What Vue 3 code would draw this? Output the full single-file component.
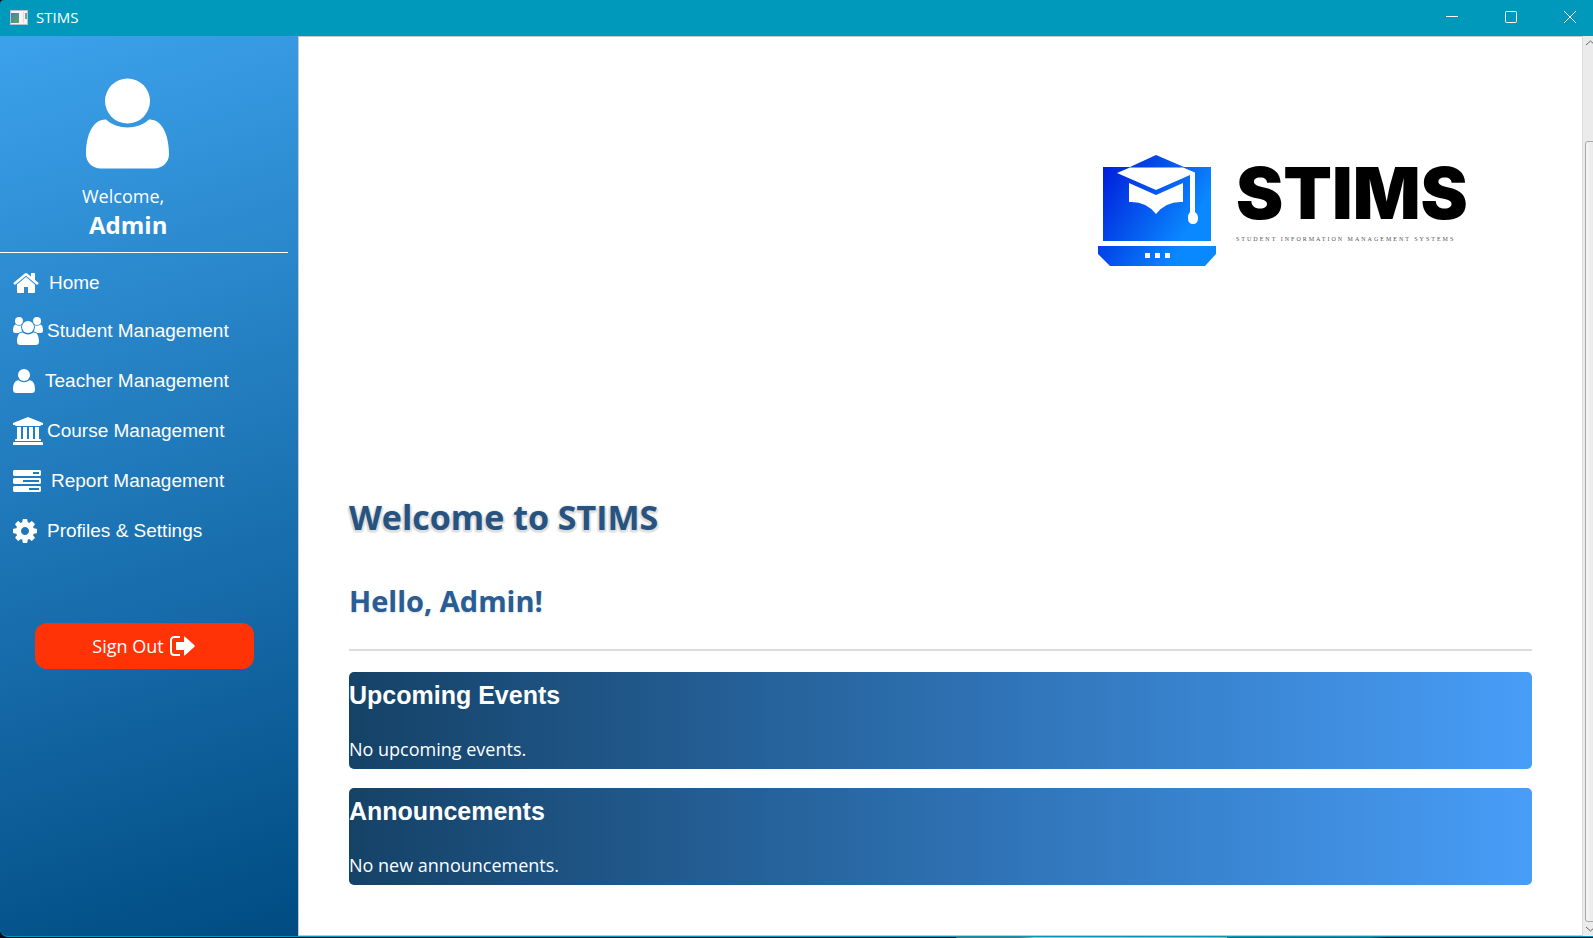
<script setup>
const navItems = [
  { id: 'home', label: 'Home', width: 26, height: 22, tight: false },
  { id: 'students', label: 'Student Management', width: 30, height: 28, tight: true },
  { id: 'teachers', label: 'Teacher Management', width: 22, height: 24, tight: false },
  { id: 'courses', label: 'Course Management', width: 30, height: 28, tight: true },
  { id: 'reports', label: 'Report Management', width: 28, height: 22, tight: false },
  { id: 'settings', label: 'Profiles & Settings', width: 24, height: 24, tight: false },
]

const cards = [
  { title: 'Upcoming Events', text: 'No upcoming events.' },
  { title: 'Announcements', text: 'No new announcements.' },
]
</script>

<template>
  <div class="desktop">
    <div class="window">
      <header class="titlebar">
        <svg class="app-icon" width="18" height="15" viewBox="0 0 18 15" aria-hidden="true">
          <defs>
            <linearGradient id="appPane" x1="0" y1="0" x2="1" y2="1">
              <stop offset="0" stop-color="#4a7fa5" />
              <stop offset="1" stop-color="#58a86a" />
            </linearGradient>
          </defs>
          <rect width="18" height="15" fill="#b9c2c4" />
          <rect x="1" y="1" width="16" height="13" fill="#f4f4f4" />
          <rect x="1" y="3" width="8" height="10" fill="url(#appPane)" />
          <rect x="13" y="2" width="1" height="11" fill="#dcdcdc" />
          <rect x="15" y="3" width="2" height="6" fill="#6aa893" />
        </svg>
        <span class="app-title">STIMS</span>
        <div class="window-buttons">
          <button type="button" aria-label="Minimize">
            <svg width="12" height="12" viewBox="0 0 12 12"><path d="M0 5.5h12" /></svg>
          </button>
          <button type="button" aria-label="Maximize">
            <svg width="12" height="12" viewBox="0 0 12 12"><rect x=".5" y=".5" width="11" height="11" rx="1" /></svg>
          </button>
          <button type="button" aria-label="Close">
            <svg width="12" height="12" viewBox="0 0 12 12"><path d="M0 0l12 12M12 0L0 12" /></svg>
          </button>
        </div>
      </header>

      <div class="body">
        <aside class="sidebar">
          <div class="profile">
            <svg class="avatar" width="84" height="92" viewBox="0 0 84 92" fill="#fff" aria-hidden="true">
              <circle cx="41.5" cy="23" r="22.5" />
              <path d="M20 41.5C31 52 52 52 63 41.5C76 41 83 57 83 76C83 84 77 90.500 68 90.500H15C6 90.500 0 84 0 76C0 57 7 41 20 41.500Z" />
            </svg>
            <p class="greeting">Welcome,</p>
            <p class="user">Admin</p>
          </div>

          <nav class="nav">
            <a
              v-for="item in navItems"
              :key="item.id"
              href="#"
              class="nav-item"
              :class="{ tight: item.tight }"
            >
              <svg v-if="item.id === 'home'" :width="item.width" :height="item.height" viewBox="64 253 1664 1283" aria-hidden="true">
                <path d="M1472 992v480q0 26-19 45t-45 19h-384v-384h-256v384h-384q-26 0-45-19t-19-45v-480q0-1 .5-3t.5-3l575-474 575 474q1 2 1 6zm223-69l-62 74q-8 9-21 11h-3q-13 0-21-7l-692-577-692 577q-12 8-24 7-13-2-21-11l-62-74q-8-10-7-23.5t11-21.5l719-599q32-26 76-26t76 26l244 204v-195q0-14 9-23t23-9h192q14 0 23 9t9 23v408l219 182q10 8 11 21.5t-7 23.5z" />
              </svg>
              <svg v-else-if="item.id === 'students'" :width="item.width" :height="item.height" viewBox="0 0 30 28" aria-hidden="true">
                <defs>
                  <mask id="frontPerson">
                    <rect width="30" height="28" fill="#fff" />
                    <circle cx="15" cy="10" r="7" fill="#000" />
                    <path d="M9 14.500C2 16 3 24 3 28H27C27 24 28 16 21 14.500Z" fill="#000" />
                  </mask>
                </defs>
                <g mask="url(#frontPerson)">
                  <circle cx="6" cy="4" r="4" />
                  <circle cx="24" cy="4" r="4" />
                  <path d="M2.500 7.500Q6 10 9.500 7.500L12 12L8 16H2.500Q0 16 0 13.500Q0 8.500 2.500 7.500Z" />
                  <path d="M27.500 7.500Q24 10 20.500 7.500L18 12L22 16H27.500Q30 16 30 13.500Q30 8.500 27.500 7.500Z" />
                </g>
                <circle cx="15" cy="10" r="6" />
                <path d="M9.500 15.500Q15 19.500 20.500 15.500C25 15.500 26 20.500 26 24.500Q26 28 22.500 28H7.500Q4 28 4 24.500C4 20.500 5 15.500 9.500 15.500Z" />
              </svg>
              <svg v-else-if="item.id === 'teachers'" :width="item.width" :height="item.height" viewBox="0 0 22 24" aria-hidden="true">
                <circle cx="11" cy="6" r="6" />
                <path d="M5.500 11.200Q11 15.500 16.500 11.200C21 11.200 22 16.500 22 20.500Q22 24 18.500 24H3.500Q0 24 0 20.500C0 16.500 1 11.200 5.500 11.200Z" />
              </svg>
              <svg v-else-if="item.id === 'courses'" :width="item.width" :height="item.height" viewBox="0 0 30 28" aria-hidden="true">
                <path d="M15 0L30 6V8H28Q28 9 27 9H3Q2 9 2 8H0V6Z" />
                <path d="M4 10H8V22H10V10H14V22H16V10H20V22H22V10H26V22H27Q28 22 28 23V24H2V23Q2 22 3 22H4Z" />
                <path d="M1 25H29Q30 25 30 26V28H0V26Q0 25 1 25Z" />
              </svg>
              <svg v-else-if="item.id === 'reports'" :width="item.width" :height="item.height" viewBox="0 0 28 22" aria-hidden="true">
                <path fill-rule="evenodd" d="M1 0H27L28 1V5L27 6H1L0 5V1ZM20 2V4H26V2Z" />
                <path fill-rule="evenodd" d="M1 8H27L28 9V13L27 14H1L0 13V9ZM10 10V12H26V10Z" />
                <path fill-rule="evenodd" d="M1 16H27L28 17V21L27 22H1L0 21V17ZM16 18V20H26V18Z" />
              </svg>
              <svg v-else :width="item.width" :height="item.height" viewBox="128 128 1536 1536" aria-hidden="true">
                <path d="M1152 896q0-106-75-181t-181-75-181 75-75 181 75 181 181 75 181-75 75-181zm512-109v222q0 12-8 23t-20 13l-185 28q-19 54-39 91 35 50 107 138 10 12 10 25t-9 23q-27 37-99 108t-94 71q-12 0-26-9l-138-108q-44 23-91 38-16 136-29 186-7 28-36 28h-222q-14 0-24.5-8.5t-11.500-21.500l-28-184q-49-16-90-37l-141 107q-10 9-25 9-14 0-25-11-126-114-165-168-7-10-7-23 0-12 8-23 15-21 51-66.500t54-70.500q-27-50-41-99l-183-27q-13-2-21-12.500t-8-23.500v-222q0-12 8-23t19-13l186-28q14-46 39-92-40-57-107-138-10-12-10-24 0-10 9-23 26-36 98.500-107.500t94.500-71.500q13 0 26 10l138 107q44-23 91-38 16-136 29-186 7-28 36-28h222q14 0 24.500 8.500t11.500 21.500l28 184q49 16 90 37l142-107q9-9 24-9 13 0 25 10 129 119 165 170 7 8 7 22 0 12-8 23-15 21-51 66.500t-54 70.500q26 50 41 98l183 28q13 2 21 12.500t8 23.500z" />
              </svg>
              <span>{{ item.label }}</span>
            </a>
          </nav>

          <button type="button" class="sign-out">
            <span>Sign Out</span>
            <svg width="25" height="20" viewBox="0 0 25 20" aria-hidden="true">
              <path d="M10 1H4.500Q1 1 1 4.500V15.500Q1 19 4.500 19H10" fill="none" stroke="#fff" stroke-width="2" />
              <path d="M6 6H14V1Q14 0 15 .7L24.500 9.300Q25 10 24.500 10.700L15 19.300Q14 20 14 19V14H6Z" fill="#fff" />
            </svg>
          </button>
        </aside>

        <main class="content">
          <div class="logo">
            <svg width="118" height="112" viewBox="0 0 118 112" aria-hidden="true">
              <defs>
                <linearGradient id="logoBlue" gradientUnits="userSpaceOnUse" x1="2" y1="20" x2="90" y2="74">
                  <stop offset="0" stop-color="#001fdc" />
                  <stop offset="1" stop-color="#0a88ff" />
                </linearGradient>
                <linearGradient id="baseBlue" gradientUnits="userSpaceOnUse" x1="0" y1="60" x2="78" y2="104">
                  <stop offset="0" stop-color="#0030e0" />
                  <stop offset="1" stop-color="#0a88ff" />
                </linearGradient>
              </defs>
              <path d="M5 12H32L58 0L86 12H113V86H5Z" fill="url(#logoBlue)" />
              <path d="M0 91H118V99L107 111H12L0 99Z" fill="url(#baseBlue)" />
              <g fill="#fff">
                <path d="M19 18L32 12.500H85L97 17.500V57Q100 59 100 63Q100 69 95 69Q90 69 90 63Q90 59 92 57V20L58 35Z" />
                <path d="M31 28L58 40L85 28V47Q68 46 58 59Q48 46 31 47Z" />
                <rect x="47" y="98" width="5" height="5" />
                <rect x="57" y="98" width="5" height="5" />
                <rect x="67" y="98" width="5" height="5" />
              </g>
            </svg>
            <div class="logo-text">
              <span class="logo-name">STIMS</span>
              <span class="logo-tagline">STUDENT INFORMATION MANAGEMENT SYSTEMS</span>
            </div>
          </div>

          <h1>Welcome to STIMS</h1>
          <h2>Hello, Admin!</h2>
          <hr />

          <section v-for="card in cards" :key="card.title" class="card">
            <h3>{{ card.title }}</h3>
            <p>{{ card.text }}</p>
          </section>
        </main>

        <div class="scrollbar">
          <button type="button" aria-label="Scroll up">
            <svg width="9" height="6" viewBox="0 0 9 6"><path d="M0 5L4.500 1L9 5" /></svg>
          </button>
          <div class="track"><div class="thumb"></div></div>
          <button type="button" aria-label="Scroll down">
            <svg width="9" height="6" viewBox="0 0 9 6"><path d="M0 1L4.500 5L9 1" /></svg>
          </button>
        </div>
      </div>
    </div>
  </div>
</template>

<style>
body {
  margin: 0;
  background: #000;
}
</style>

<style scoped>
.desktop {
  box-sizing: border-box;
  height: 100vh;
  min-height: 900px;
  padding-bottom: 1px;
  overflow: hidden;
  background: linear-gradient(90deg, #0a0a0e 60%, #d8401c 60%, #d8401c 64%, #c8b890 65%, #b8a880 77%, #2c6868 77%, #2c5860 86%, #0a0a0e 87%);
  font-family: "Open Sans", "Noto Sans", sans-serif;
}

.window {
  box-sizing: border-box;
  display: flex;
  flex-direction: column;
  height: 100%;
  overflow: hidden;
  border-bottom: 1px solid #0099bc;
  border-radius: 4px 0 0 8px;
  background: #0099bc;
}

.titlebar {
  box-sizing: border-box;
  display: flex;
  align-items: center;
  flex: none;
  height: 36px;
  padding: 0 0 2px 10px;
  color: #fff;
}

.app-icon {
  flex: none;
  margin-right: 8px;
}

.app-title {
  font-size: 15px;
  line-height: 20px;
}

.window-buttons {
  display: flex;
  gap: 1px;
  margin-left: auto;
  margin-right: -6px;
}

.window-buttons button {
  display: flex;
  align-items: center;
  justify-content: center;
  width: 58px;
  height: 34px;
  padding: 0;
  border: 0;
  background: none;
}

.window-buttons svg {
  fill: none;
  stroke: #fff;
}

.body {
  display: grid;
  grid-template-columns: 298px 1fr 10px;
  flex: 1;
  min-height: 0;
}

.sidebar {
  background: linear-gradient(162deg, #3ca2ec, #004b82);
  color: #fff;
}

.profile {
  width: 288px;
  border-bottom: 1px solid #fff;
}

.avatar {
  display: block;
  margin: 42px 0 0 86px;
}

.greeting {
  margin: 12px 0 0 82px;
  font-size: 18px;
  line-height: 28px;
}

.user {
  margin: 0 0 0 89px;
  padding-bottom: 12px;
  font-size: 24px;
  font-weight: 700;
  line-height: 30px;
}

.nav {
  display: flex;
  flex-direction: column;
  padding-top: 7px;
}

.nav-item {
  display: flex;
  align-items: center;
  gap: 10px;
  height: 50px;
  padding-left: 13px;
  color: #fff;
  font-family: "Liberation Sans", Arial, sans-serif;
  font-size: 19px;
  text-decoration: none;
}

.nav-item.tight {
  gap: 4px;
}

.nav-item:first-child {
  height: 46px;
}

.nav-item svg {
  flex: none;
  fill: #fff;
}

.sign-out {
  display: flex;
  align-items: center;
  justify-content: center;
  gap: 6px;
  width: 219px;
  height: 46px;
  margin: 67px 0 0 35px;
  padding: 0 2px 0 0;
  border: 0;
  border-radius: 12px;
  background: #ff3305;
  color: #fff;
  font-family: inherit;
  font-size: 18px;
}

.content {
  min-width: 0;
  padding: 118px 50px 0 50px;
  overflow: hidden;
  border: 1px solid #c8c8c8;
  border-right-color: #dcdcdc;
  background: #fff;
}

.logo {
  display: flex;
  gap: 20px;
  justify-content: flex-end;
  margin-right: 66px;
}

.logo svg {
  flex: none;
}

.logo-text {
  display: flex;
  flex-direction: column;
  width: 230px;
  color: #000;
}

.logo-name {
  font-family: Inter, sans-serif;
  font-size: 71px;
  font-weight: 900;
  line-height: 76px;
}

.logo-tagline {
  color: #555;
  font-family: "Liberation Serif", serif;
  font-size: 6px;
  letter-spacing: 2px;
  line-height: 16px;
  white-space: nowrap;
}

h1 {
  margin: 226px 0 0;
  color: #275380;
  font-size: 34px;
  line-height: 48px;
  text-shadow: 0 0 2px #ccc, 2px 2px 1px #e2e2e2, -2px 2px 1px #e2e2e2, 0 3px 1px #e6e6e6;
}

h2 {
  margin: 40px 0 0;
  color: #285d96;
  font-size: 29px;
  line-height: 40px;
  text-shadow: 0 1px 2px #ddd;
}

hr {
  margin: 28px 0 0;
  border: 0;
  border-top: 2px solid #dcdcdc;
}

.card {
  box-sizing: border-box;
  height: 97px;
  margin-top: 19px;
  border-radius: 5px;
  background: linear-gradient(90deg, #154267, #2a6aa8 45%, #489df7);
  color: #fff;
}

hr + .card {
  margin-top: 21px;
}

h3 {
  margin: 0;
  padding-top: 7px;
  font-family: "Liberation Sans", Arial, sans-serif;
  font-size: 25px;
  line-height: 32px;
}

.card p {
  margin: 25px 0 0;
  font-size: 18px;
  line-height: 26px;
}

.scrollbar {
  display: flex;
  flex-direction: column;
  min-height: 0;
  overflow: hidden;
  background: #ebebeb;
}

.scrollbar button {
  display: flex;
  align-items: center;
  flex: none;
  height: 14px;
  padding: 0 0 0 3px;
  border: 0;
  background: none;
}

.scrollbar svg {
  flex: none;
  fill: none;
  stroke: #666;
}

.track {
  box-sizing: border-box;
  flex: 1;
  min-height: 0;
  padding: 91px 0 0 2px;
}

.thumb {
  box-sizing: border-box;
  width: 16px;
  height: 100%;
  border: 1px solid #a8a8a8;
  border-radius: 3px;
  background: linear-gradient(90deg, #f6f6f6, #dedede);
}
</style>
